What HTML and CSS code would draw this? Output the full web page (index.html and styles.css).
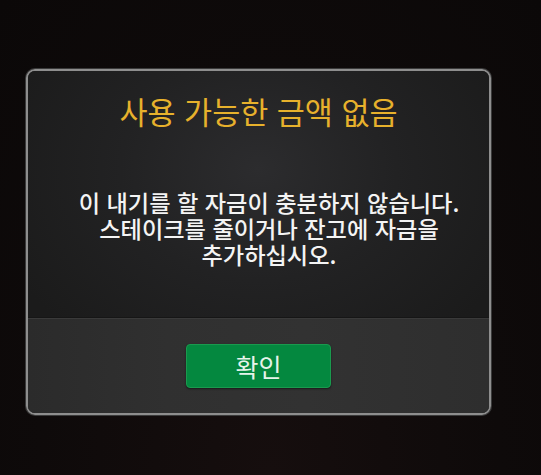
FILE: index.html
```html
<!DOCTYPE html>
<html lang="ko">
<head>
<meta charset="utf-8">
<link rel="stylesheet" href="styles.css">
</head>
<body>
<div class="stage">
  <div class="dialog">
    <div class="main">
      <h1 class="title">사용 가능한 금액 없음</h1>
      <p class="message">이 내기를 할 자금이 충분하지 않습니다.<br>스테이크를 줄이거나 잔고에 자금을<br>추가하십시오.</p>
    </div>
    <div class="footer">
      <button class="ok">확인</button>
    </div>
  </div>
</div>
</body>
</html>
```
FILE: styles.css
```css
html, body {
  margin: 0;
  padding: 0;
  width: 541px;
  height: 475px;
  overflow: hidden;
}
body {
  background: radial-gradient(ellipse at 50% 100%, #160e0e 0%, #0e0a0a 60%, #0b0808 100%);
  font-family: "Noto Sans CJK KR", "Noto Sans", sans-serif;
}
.stage {
  padding-top: 69px;
  padding-left: 26px;
}
.dialog {
  width: 461px;
  height: 342px;
  border: 2px solid #8e8e8e;
  border-radius: 9px;
  overflow: hidden;
  display: flex;
  flex-direction: column;
  box-shadow: 0 0 0 1px #3a3a3a, inset 0 0 0 1px #1a1a1a;
}
.main {
  height: 247px;
  background: radial-gradient(ellipse 60% 90% at 50% 40%, #2c2c2e 0%, #222223 50%, #1b1b1b 100%);
  border-bottom: 1px solid #161616;
  text-align: center;
  padding-top: 22px;
  box-sizing: border-box;
}
.title {
  margin: 0;
  font-size: 30.5px;
  line-height: 36px;
  font-weight: 400;
  color: #e7b12c;
}
.message {
  margin: 60px 0 0;
  padding-left: 21px;
  font-size: 23.2px;
  line-height: 26px;
  font-weight: 500;
  color: #f4f4f4;
}
.footer {
  flex: 1;
  background: linear-gradient(90deg, #2b2b2b 0%, #303030 30%, #323232 60%, #2e2e2e 100%);
  border-top: 1px solid #3a3a3a;
  display: flex;
  align-items: center;
  justify-content: center;
}
.ok {
  width: 145px;
  height: 44px;
  background: #04883f;
  border: 1px solid #1a9a4e;
  border-radius: 4px;
  color: #e6f4ea;
  font-family: "Noto Sans CJK KR", "Noto Sans", sans-serif;
  font-size: 25px;
  font-weight: 400;
  padding: 0;
  box-shadow: 0 1px 2px rgba(0,0,0,0.5);
}
```
